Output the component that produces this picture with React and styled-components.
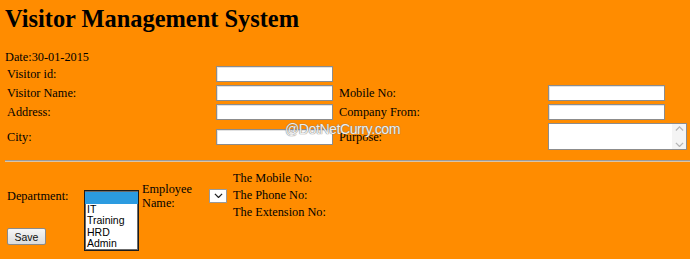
import styled, { createGlobalStyle } from "styled-components";

const GlobalStyle = createGlobalStyle`
    html, body {
        margin:0;
        padding:0;
        background:#ff8c00;
    }
    body {
        padding:5px 0 0 5px;
        font-family:"Liberation Serif", "Times New Roman", serif;
        font-size:12.3px;
        color:#000;
        overflow:hidden;
    }
`;

const Page = styled.div`
    position:relative;
    width:685px;
    height:254px;
`;
const Title = styled.h1`
    margin:0 0 18px 0;
    font-size:24.4px;
    line-height:27px;
    font-weight:bold;
`;
const DateLine = styled.div`
    line-height:14px;
    height:14px;
`;
const FormGrid = styled.div`
    display:grid;
    grid-template-columns:209px 123px 209px auto;
    row-gap:3px;
    align-items:center;
    margin-top:2px;
    padding-left:2px;
`;
const Label = styled.span`
    line-height:14px;
`;
const TextBox = styled.div`
    box-sizing:border-box;
    width:117px;
    height:16px;
    background:#fff;
    border:1px solid #8c8c8c;
    box-shadow:inset 1px 1px 0 #e2e2e2;
`;
const TextArea = styled.div`
    box-sizing:border-box;
    width:139px;
    height:27px;
    background:#fff;
    border:1px solid #8c8c8c;
    display:flex;
    justify-content:flex-end;
`;
const ScrollBar = styled.div`
    width:14px;
    background:#f4f4f4;
    display:flex;
    flex-direction:column;
    justify-content:space-between;
    align-items:center;
    padding:2px 0;
`;
const Rule = styled.hr`
    margin:10px -5px 8px 0;
    height:0;
    border:none;
    border-top:1px solid #9b9b9b;
    border-bottom:1px solid #d9c4a8;
`;
const BottomGrid = styled.div`
    display:grid;
    grid-template-columns:77px 58px 67px 24px auto;
    grid-template-rows:51px auto;
    row-gap:1px;
    align-items:center;
    padding-left:2px;
`;
const ListBox = styled.div`
    grid-row:1 / span 2;
    grid-column:2;
    align-self:start;
    margin-top:20px;
    box-sizing:border-box;
    width:55px;
    height:61px;
    background:#fff;
    border:1px solid #1c1c1c;
    box-shadow:inset 0 0 0 1px #6b6b6b;
    padding:1px 0;
    font-family:"Liberation Sans", Arial, sans-serif;
    font-size:10.5px;
    overflow:hidden;
`;
const Option = styled.div`
    height:11.6px;
    line-height:11.6px;
    padding-left:2px;
    background:${p => (p.$selected ? "#2b9be0" : "transparent")};
`;
const EmployeeLabel = styled.span`
    grid-column:3;
    line-height:14px;
    padding-right:8px;
`;
const DropDown = styled.div`
    grid-column:4;
    box-sizing:border-box;
    width:18px;
    height:14px;
    background:#fff;
    border:1px solid #9a9a9a;
    display:flex;
    align-items:center;
    justify-content:center;
`;
const InfoList = styled.div`
    grid-column:5;
    display:flex;
    flex-direction:column;
    line-height:17px;
`;
const SaveButton = styled.button`
    grid-row:2;
    grid-column:1;
    justify-self:start;
    width:39px;
    height:17px;
    padding:0;
    border:1px solid #8a8a8a;
    border-radius:2px;
    background:linear-gradient(#f6f6f6, #dcdcdc);
    font-family:"Liberation Sans", Arial, sans-serif;
    font-size:10.5px;
    color:#111;
`;
const Watermark = styled.span`
    position:absolute;
    left:280px;
    top:116px;
    font-family:"Liberation Sans", Arial, sans-serif;
    font-size:14px;
    letter-spacing:-0.4px;
    line-height:16px;
    color:rgba(255,255,255,0.9);
    text-shadow:0 0 1px #7a7a7a, 0 0 1px #7a7a7a;
    pointer-events:none;
`;

const Chevron = ({ up, color = "#222", size = 9 }) => (
    <svg width={size} height={size * 0.6} viewBox="0 0 10 6">
        <path
            d={up ? "M1 5 L5 1 L9 5" : "M1 1 L5 5 L9 1"}
            fill="none"
            stroke={color}
            strokeWidth="1.4"
        />
    </svg>
);

const App = () => {
    return (
        <Page>
            <GlobalStyle />
            <Title>Visitor Management System</Title>
            <DateLine>Date:30-01-2015</DateLine>
            <FormGrid>
                <Label>Visitor id:</Label>
                <TextBox />
                <span />
                <span />

                <Label>Visitor Name:</Label>
                <TextBox />
                <Label>Mobile No:</Label>
                <TextBox />

                <Label>Address:</Label>
                <TextBox />
                <Label>Company From:</Label>
                <TextBox />

                <Label>City:</Label>
                <TextBox />
                <Label>Purpose:</Label>
                <TextArea>
                    <ScrollBar>
                        <Chevron up color="#b5b5b5" size={9} />
                        <Chevron color="#b5b5b5" size={9} />
                    </ScrollBar>
                </TextArea>
            </FormGrid>
            <Rule />
            <BottomGrid>
                <Label>Department:</Label>
                <ListBox>
                    <Option $selected>&nbsp;</Option>
                    <Option>IT</Option>
                    <Option>Training</Option>
                    <Option>HRD</Option>
                    <Option>Admin</Option>
                </ListBox>
                <EmployeeLabel>Employee Name:</EmployeeLabel>
                <DropDown>
                    <Chevron size={9} />
                </DropDown>
                <InfoList>
                    <span>The Mobile No:</span>
                    <span>The Phone No:</span>
                    <span>The Extension No:</span>
                </InfoList>
                <SaveButton>Save</SaveButton>
            </BottomGrid>
            <Watermark>@DotNetCurry.com</Watermark>
        </Page>
    );
};

export default App;
